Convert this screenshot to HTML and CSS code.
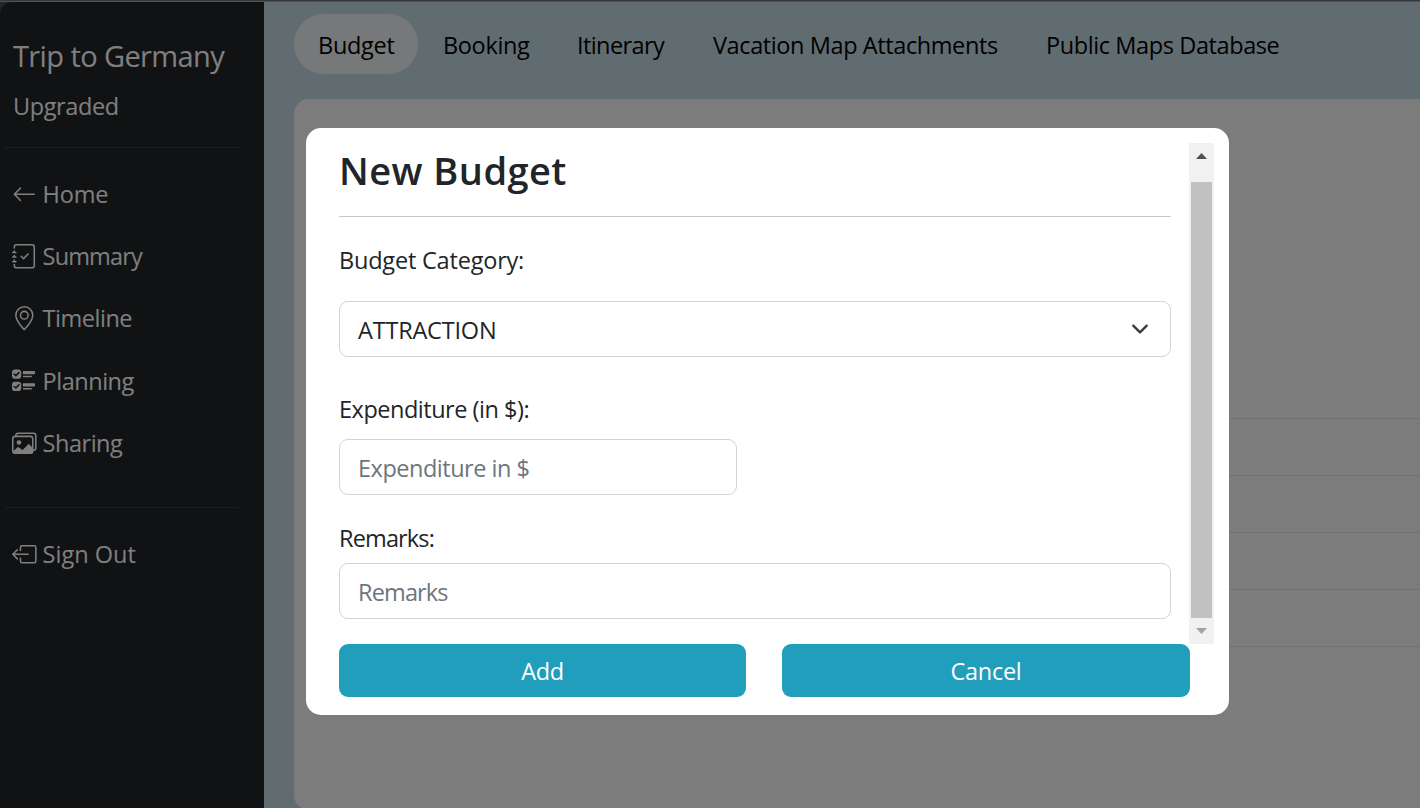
FILE: index.html
```html
<!DOCTYPE html>
<html lang="en">
<head>
<meta charset="utf-8">
<title>Trip to Germany</title>
<link rel="stylesheet" href="styles.css">
</head>
<body>
<div class="app">
  <aside class="sidebar">
    <h1 class="trip"><span>Trip to Germany</span></h1>
    <p class="plan"><span>Upgraded</span></p>
    <nav class="menu">
      <a class="item"><svg class="icon" viewBox="0 0 16 16"><path fill-rule="evenodd" d="M15 8a.5.5 0 0 0-.5-.5H2.707l3.147-3.146a.5.5 0 1 0-.708-.708l-4 4a.5.5 0 0 0 0 .708l4 4a.5.5 0 0 0 .708-.708L2.707 8.5H14.5A.5.5 0 0 0 15 8z"/></svg><span>Home</span></a>
      <a class="item tightest"><svg class="icon" viewBox="0 0 16 16"><path fill-rule="evenodd" d="M10.854 6.146a.5.5 0 0 1 0 .708l-3 3a.5.5 0 0 1-.708 0l-1.5-1.5a.5.5 0 1 1 .708-.708L7.500 8.793l2.646-2.647a.5.5 0 0 1 .708 0z"/><path d="M3 0h10a2 2 0 0 1 2 2v12a2 2 0 0 1-2 2H3a2 2 0 0 1-2-2v-1h1v1a1 1 0 0 0 1 1h10a1 1 0 0 0 1-1V2a1 1 0 0 0-1-1H3a1 1 0 0 0-1 1v1H1V2a2 2 0 0 1 2-2z"/><path d="M1 5v-.5a.5.5 0 0 1 1 0V5h.5a.5.5 0 0 1 0 1h-2a.5.5 0 0 1 0-1H1zm0 3v-.5a.5.5 0 0 1 1 0V8h.5a.5.5 0 0 1 0 1h-2a.5.5 0 0 1 0-1H1zm0 3v-.5a.5.5 0 0 1 1 0v.5h.5a.5.5 0 0 1 0 1h-2a.5.5 0 0 1 0-1H1z"/></svg><span>Summary</span></a>
      <a class="item tight"><svg class="icon" viewBox="0 0 16 16"><path d="M12.166 8.940c-.524 1.062-1.234 2.120-1.960 3.070A31.493 31.493 0 0 1 8 14.580a31.481 31.481 0 0 1-2.206-2.570c-.726-.950-1.436-2.008-1.960-3.070C3.304 7.867 3 6.862 3 6a5 5 0 0 1 10 0c0 .862-.305 1.867-.834 2.940zM8 16s6-5.686 6-10A6 6 0 0 0 2 6c0 4.314 6 10 6 10z"/><path d="M8 8a2 2 0 1 1 0-4 2 2 0 0 1 0 4zm0 1a3 3 0 1 0 0-6 3 3 0 0 0 0 6z"/></svg><span>Timeline</span></a>
      <a class="item tight"><svg class="icon" viewBox="0 0 16 16"><path d="M7 2.500a.5.5 0 0 1 .5-.5h7a.5.5 0 0 1 .5.5v1a.5.5 0 0 1-.5.5h-7a.5.5 0 0 1-.5-.5v-1zM2 1a2 2 0 0 0-2 2v2a2 2 0 0 0 2 2h2a2 2 0 0 0 2-2V3a2 2 0 0 0-2-2H2zm0 8a2 2 0 0 0-2 2v2a2 2 0 0 0 2 2h2a2 2 0 0 0 2-2v-2a2 2 0 0 0-2-2H2zm.854-3.646a.5.5 0 0 1-.708 0l-1-1a.5.5 0 1 1 .708-.708l.646.647 1.646-1.647a.5.5 0 1 1 .708.708l-2 2zm0 8a.5.5 0 0 1-.708 0l-1-1a.5.5 0 0 1 .708-.708l.646.647 1.646-1.647a.5.5 0 0 1 .708.708l-2 2zM7 10.500a.5.5 0 0 1 .5-.5h7a.5.5 0 0 1 .5.5v1a.5.5 0 0 1-.5.5h-7a.5.5 0 0 1-.5-.5v-1zm0-5a.5.5 0 0 1 .5-.5h5a.5.5 0 0 1 0 1h-5a.5.5 0 0 1-.5-.5zm0 8a.5.5 0 0 1 .5-.5h5a.5.5 0 0 1 0 1h-5a.5.5 0 0 1-.5-.5z"/></svg><span>Planning</span></a>
      <a class="item tight"><svg class="icon" viewBox="0 0 16 16"><path d="M4.502 9a1.500 1.500 0 1 0 0-3 1.500 1.500 0 0 0 0 3z"/><path d="M14.002 13a2 2 0 0 1-2 2h-10a2 2 0 0 1-2-2V5A2 2 0 0 1 2 3a2 2 0 0 1 2-2h10a2 2 0 0 1 2 2v8a2 2 0 0 1-1.998 2zM14 2H4a1 1 0 0 0-1 1h9.002a2 2 0 0 1 2 2v7A1 1 0 0 0 15 11V3a1 1 0 0 0-1-1zM2.002 4a1 1 0 0 0-1 1v8l2.646-2.354a.5.5 0 0 1 .63-.062l2.660 1.773 3.710-3.710a.5.5 0 0 1 .577-.094l1.777 1.947V5a1 1 0 0 0-1-1h-10z"/></svg><span>Sharing</span></a>
    </nav>
    <a class="item signout"><svg class="icon" viewBox="0 0 16 16"><path fill-rule="evenodd" d="M6 12.500a.5.5 0 0 0 .5.5h8a.5.5 0 0 0 .5-.5v-9a.5.5 0 0 0-.5-.5h-8a.5.5 0 0 0-.5.5v2a.5.5 0 0 1-1 0v-2A1.500 1.500 0 0 1 6.500 2h8A1.500 1.500 0 0 1 16 3.500v9a1.500 1.500 0 0 1-1.500 1.500h-8A1.500 1.500 0 0 1 5 12.500v-2a.5.5 0 0 1 1 0v2z"/><path fill-rule="evenodd" d="M.146 8.354a.5.5 0 0 1 0-.708l3-3a.5.5 0 1 1 .708.708L1.707 7.500H10.500a.5.5 0 0 1 0 1H1.707l2.147 2.146a.5.5 0 0 1-.708.708l-3-3z"/></svg><span>Sign Out</span></a>
  </aside>
  <main class="main">
    <nav class="tabs">
      <a class="tab active t1"><span>Budget</span></a>
      <a class="tab t2"><span>Booking</span></a>
      <a class="tab t3"><span>Itinerary</span></a>
      <a class="tab t4"><span>Vacation Map Attachments</span></a>
      <a class="tab t5"><span>Public Maps Database</span></a>
    </nav>
    <section class="panel">
      <div class="row"></div><div class="row"></div><div class="row"></div><div class="row"></div><div class="row"></div>
    </section>
  </main>
</div>
<div class="backdrop">
  <div class="modal">
    <div class="scroller">
      <form class="form">
        <h2 class="title"><span>New Budget</span></h2>
        <label class="label category"><span>Budget Category:</span></label>
        <div class="field select"><span>ATTRACTION</span><svg class="chevron" viewBox="0 0 16 16"><path d="m2 5 6 6 6-6"/></svg></div>
        <label class="label expenditure tight"><span>Expenditure (in $):</span></label>
        <div class="field half hint tight"><span>Expenditure in $</span></div>
        <label class="label remarks tightest"><span>Remarks:</span></label>
        <div class="field hint tightest"><span>Remarks</span></div>
      </form>
      <div class="scrollbar">
        <svg class="arrow" viewBox="0 0 11 6"><path d="M0 6 5.500 0 11 6z" fill="#505050"/></svg>
        <div class="thumb"></div>
        <svg class="arrow" viewBox="0 0 11 6"><path d="M0 0h11L5.500 6z" fill="#a3a3a3"/></svg>
      </div>
    </div>
    <div class="actions">
      <button class="button">Add</button>
      <button class="button">Cancel</button>
    </div>
  </div>
</div>
</body>
</html>
```
FILE: styles.css
```css
* { box-sizing: border-box; }
body {
  margin: 0;
  height: 808px;
  overflow: hidden;
  background: #46484e;
  color: #212529;
  font: 23.5px/36px "Segoe UI", "Open Sans", "Noto Sans", sans-serif;
  letter-spacing: -0.2px;
}
h1, h2, p { margin: 0; font-weight: 400; }
.tight { letter-spacing: -0.48px; }
.tightest { letter-spacing: -0.85px; }

.app {
  display: flex;
  height: 808px;
  padding-top: 1px;
  border-top: 1px solid #706e76;
  box-shadow: inset 0 1px #a09ea8;
}
.sidebar {
  width: 264px;
  padding: 31px 23px 0 3px;
  background: #212529;
  border-top-left-radius: 12px;
  color: #fff;
}
.trip { padding-left: 10px; font-size: 29px; line-height: 45px; letter-spacing: -0.6px; }
.plan { padding: 10px 0 0 10px; height: 70px; border-bottom: 1px solid #383b3f; letter-spacing: -0.4px; }
.menu { height: 360px; margin: 0 3px 0 2px; padding-top: 15px; border-bottom: 1px solid #383b3f; }
.item { display: flex; align-items: center; gap: 6px; height: 62.2px; padding-left: 7px; }
.icon { width: 24.600px; height: 24.600px; fill: currentColor; }
.signout { margin: 15px 0 0 2px; letter-spacing: 0; }

.main { flex: 1; padding: 12px 0 0 30px; background: #c3d8e0; }
.tabs { display: flex; height: 60px; color: #000; }
.tab { padding: 13px 0 0 24px; white-space: nowrap; }
.t1 { width: 124px; letter-spacing: -0.3px; }
.t2 { width: 135px; padding-left: 25px; letter-spacing: -0.35px; }
.t3 { width: 135px; letter-spacing: -0.6px; }
.t4 { width: 333px; padding-left: 25px; letter-spacing: -0.4px; }
.t5 { padding-left: 25px; letter-spacing: -0.4px; }
.active { background: #edf1f2; border-radius: 30px; }
.panel {
  height: 711px;
  margin-top: 25px;
  padding: 263px 0 0 30px;
  background: #f6f9f6;
  border-radius: 15px 0 0 15px;
}
.row { height: 57px; border-bottom: 1px solid #dee0e1; }

.backdrop { position: absolute; inset: 0; background: rgba(0, 0, 0, .5); }
.modal {
  position: absolute;
  left: 306px;
  top: 128px;
  width: 923px;
  height: 587px;
  padding: 15px;
  border-radius: 15px;
  background: #fff;
}
.scroller { display: flex; height: 501px; }
.form { flex: 1; padding: 0 18px; }
.title {
  height: 74px;
  border-bottom: 1px solid #c7c8c9;
  font-size: 38px;
  font-weight: 600;
  line-height: 55px;
  letter-spacing: 0.45px;
}
.label { display: block; height: 36px; }
.category { margin: 25px 0 23px; }
.expenditure { margin: 34px 0 12px; }
.remarks { margin: 25px 0 7px; }
.field {
  display: flex;
  align-items: center;
  justify-content: space-between;
  height: 56px;
  padding: 1px 18px 0;
  border: 1px solid #ced4da;
  border-radius: 9px;
}
.half { width: 398px; }
.hint { color: #6c757d; }
.chevron {
  width: 18px;
  height: 18px;
  margin: -2px 3px 0 0;
  fill: none;
  stroke: #343a40;
  stroke-width: 2;
  stroke-linecap: round;
  stroke-linejoin: round;
}
.scrollbar {
  display: flex;
  flex-direction: column;
  align-items: center;
  justify-content: space-between;
  width: 25px;
  padding: 10px 0;
  background: #f1f1f1;
}
.arrow { width: 11px; height: 6px; }
.thumb { width: 21px; height: 436px; margin-top: 13px; background: #c1c1c1; }
.actions { display: grid; grid-template-columns: 407px 408px; gap: 36px; padding-left: 18px; }
.button {
  height: 53px;
  padding: 0;
  border: 0;
  border-radius: 9px;
  background: #219ebc;
  color: #fff;
  font: inherit;
  letter-spacing: -0.3px;
}
```
